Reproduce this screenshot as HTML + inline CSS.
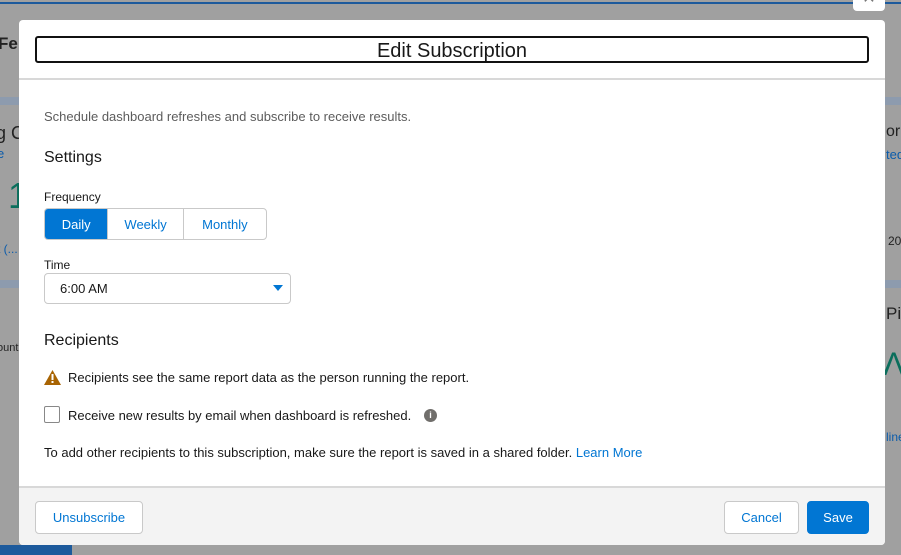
<!DOCTYPE html>
<html><head><meta charset="utf-8"><style>
*{box-sizing:border-box;margin:0;padding:0}
body{width:901px;height:555px;overflow:hidden;background:#a0a0a0;font-family:"Liberation Sans",sans-serif;position:relative;color:#181818}
.abs{position:absolute}
.bgtext{position:absolute;font-size:14px;color:#222}
.modal{position:absolute;left:19px;top:20px;width:866px;height:525px;background:#fff;border-radius:4px;overflow:hidden}
.hdr{position:absolute;left:0;top:0;width:866px;height:60px;border-bottom:2px solid #d8d8d8}
.title{position:absolute;left:16px;top:16px;width:834px;height:27px;border:2px solid #111;border-radius:3px;text-align:center;font-size:20px;line-height:26px;color:#181818}
.t{position:absolute;font-size:13px;color:#181818;white-space:nowrap}
.seg{position:absolute;left:25px;top:188px;height:32px;width:223px;border:1px solid #c9c9c9;border-radius:4px;display:flex;overflow:hidden}
.seg div{font-size:13px;line-height:31px;text-align:center;color:#0176d3}
.sel{position:absolute;left:25px;top:253px;width:247px;height:31px;border:1px solid #c9c9c9;border-radius:4px;font-size:13px;line-height:30px;padding-left:15px}
.ftr{position:absolute;left:0;top:466px;width:866px;height:59px;background:#f3f3f3;border-top:2px solid #d8d8d8}
.btn{position:absolute;top:13px;height:33px;border:1px solid #c9c9c9;border-radius:4px;background:#fff;color:#0176d3;font-size:13px;line-height:32px;text-align:center}
</style></head><body>
<div class="abs" style="left:0;top:2px;width:901px;height:2px;background:#1d5a9c"></div>
<div class="abs" style="left:853px;top:-6px;width:32px;height:17px;background:#fff;border-radius:4px;text-align:center;color:#777;font-size:16px;line-height:10px">✕</div>
<div class="bgtext" style="left:-2px;top:34px;font-weight:bold;font-size:17px">Feb</div>
<div class="bgtext" style="left:-4px;top:123px;font-size:18px">g C</div>
<div class="bgtext" style="left:-3px;top:146px;color:#0b5cab;font-size:13px">e</div>
<div class="bgtext" style="left:8px;top:175px;color:#0b6e5c;font-size:36px">1</div>
<div class="bgtext" style="left:-3px;top:242px;color:#0b5cab;font-size:12px">t (...</div>
<div class="bgtext" style="left:-3px;top:342px;font-size:11px">ount</div>
<div class="abs" style="left:0;top:97px;width:19px;height:8px;background:#8d9bae"></div>
<div class="abs" style="left:0;top:280px;width:19px;height:8px;background:#8d9bae"></div>
<div class="abs" style="left:885px;top:97px;width:16px;height:8px;background:#8d9bae"></div>
<div class="abs" style="left:885px;top:280px;width:16px;height:8px;background:#8d9bae"></div>
<div class="bgtext" style="left:886px;top:123px;font-size:16px">or</div>
<div class="bgtext" style="left:886px;top:147px;color:#0b5cab;font-size:13px">ted</div>
<div class="bgtext" style="left:888px;top:234px;font-size:12px">20</div>
<div class="bgtext" style="left:886px;top:304px;font-size:17px">Pi</div>
<div class="bgtext" style="left:883px;top:346px;color:#0b6e5c;font-size:32px">Λ</div>
<div class="bgtext" style="left:886px;top:430px;color:#0b5cab;font-size:12px">line</div>
<div class="abs" style="left:0;top:545px;width:72px;height:10px;background:#1d5a9c"></div>
<div class="modal">
 <div class="hdr"><div class="title">Edit Subscription</div></div>
 <div class="t" style="left:25px;top:89px;color:#5c5c5c">Schedule dashboard refreshes and subscribe to receive results.</div>
 <div class="t" style="left:25px;top:129px;font-size:16px">Settings</div>
 <div class="t" style="left:25px;top:170px;font-size:12px">Frequency</div>
 <div class="seg"><div style="width:63px;background:#0176d3;color:#fff">Daily</div><div style="width:76px;border-left:1px solid #c9c9c9">Weekly</div><div style="width:84px;border-left:1px solid #c9c9c9">Monthly</div></div>
 <div class="t" style="left:25px;top:238px;font-size:12px">Time</div>
 <div class="sel">6:00 AM<svg class="abs" style="left:228px;top:11px" width="10" height="7"><path d="M0 0H10L5 6Z" fill="#0176d3"/></svg></div>
 <div class="t" style="left:25px;top:312px;font-size:16px">Recipients</div>
 <svg class="abs" style="left:25px;top:350px" width="17" height="15"><path d="M8.5 0L17 15H0Z" fill="#a86403"/><rect x="7.5" y="4" width="2" height="6" fill="#fff"/><rect x="7.5" y="11" width="2" height="2" fill="#fff"/></svg>
 <div class="t" style="left:49px;top:350px">Recipients see the same report data as the person running the report.</div>
 <div class="abs" style="left:25px;top:386px;width:16px;height:17px;border:1px solid #888;border-radius:2px"></div>
 <div class="t" style="left:49px;top:388px">Receive new results by email when dashboard is refreshed.</div>
 <div class="abs" style="left:405px;top:389px;width:13px;height:13px;border-radius:50%;background:#706e6b;color:#fff;font-size:9px;font-weight:bold;text-align:center;line-height:13px">i</div>
 <div class="t" style="left:25px;top:425px">To add other recipients to this subscription, make sure the report is saved in a shared folder. <span style="color:#0176d3">Learn More</span></div>
 <div class="ftr">
  <div class="btn" style="left:16px;width:108px">Unsubscribe</div>
  <div class="btn" style="left:705px;width:75px">Cancel</div>
  <div class="btn" style="left:788px;width:62px;background:#0176d3;border-color:#0176d3;color:#fff">Save</div>
 </div>
</div>
</body></html>
